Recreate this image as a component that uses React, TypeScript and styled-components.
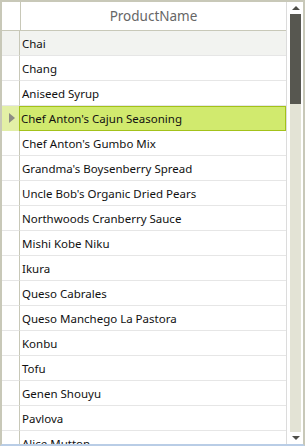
import React from "react";
import styled, { createGlobalStyle } from "styled-components";

const Global = createGlobalStyle`
  html, body { margin: 0; padding: 0; background: #ffffff; }
  body { font-family: "Noto Sans", "Open Sans", sans-serif; }
`;

const products = [
  "Chai",
  "Chang",
  "Aniseed Syrup",
  "Chef Anton's Cajun Seasoning",
  "Chef Anton's Gumbo Mix",
  "Grandma's Boysenberry Spread",
  "Uncle Bob's Organic Dried Pears",
  "Northwoods Cranberry Sauce",
  "Mishi Kobe Niku",
  "Ikura",
  "Queso Cabrales",
  "Queso Manchego La Pastora",
  "Konbu",
  "Tofu",
  "Genen Shouyu",
  "Pavlova",
  "Alice Mutton",
];

const Frame = styled.div`
  box-sizing: border-box;
  width: 305px;
  height: 446px;
  display: flex;
  border-left: 2px solid #c8c8b8;
  border-top: 2px solid #c8c8b8;
  border-right: 2px solid #c8c8b8;
  border-bottom: 2px solid #b9cde6;
  overflow: hidden;
  background: #fff;
`;

const GridArea = styled.div`
  flex: 1;
  display: flex;
  flex-direction: column;
  overflow: hidden;
  border-right: 1px solid #dcdcdc;
`;

const HeaderRow = styled.div`
  display: flex;
  height: 28px;
  flex-shrink: 0;
  border-bottom: 1px solid #c8c8b8;
`;

const Corner = styled.div`
  width: 18px;
  border-right: 1px solid #c8c8b8;
`;

const HeaderCell = styled.div`
  flex: 1;
  display: flex;
  align-items: center;
  justify-content: center;
  font-size: 13.5px;
  color: #666666;
`;

const Row = styled.div<{ $alt?: boolean }>`
  display: flex;
  height: 25px;
  flex-shrink: 0;
  box-sizing: border-box;
  background: ${(p) => (p.$alt ? "#f2f3f0" : "#ffffff")};
`;

const RowHeader = styled.div<{ $selected?: boolean }>`
  width: 18px;
  box-sizing: border-box;
  border-right: 1px solid #c8c8b8;
  border-bottom: 1px solid ${(p) => (p.$selected ? "#e2eea8" : "#e6e6e6")};
  background: ${(p) => (p.$selected ? "#e3f0a6" : "transparent")};
  display: flex;
  align-items: center;
  justify-content: center;
`;

const Cell = styled.div<{ $selected?: boolean }>`
  flex: 1;
  box-sizing: border-box;
  display: flex;
  align-items: center;
  padding-left: 2px;
  font-size: 11.5px;
  color: #111;
  white-space: nowrap;
  border-bottom: 1px solid #e6e6e6;
  ${(p) =>
    p.$selected
      ? `background: #d1ea6e; border: 1px solid #a3c21a; padding-left: 1px; margin-left: -1px;`
      : ""}
`;

const Triangle = styled.div`
  width: 0;
  height: 0;
  border-top: 5px solid transparent;
  border-bottom: 5px solid transparent;
  border-left: 6px solid #8d8d84;
  margin-left: 2px;
`;

const ScrollBar = styled.div`
  width: 16px;
  flex-shrink: 0;
  display: flex;
  flex-direction: column;
  align-items: stretch;
  padding: 0 2px 0 3px;
  box-sizing: border-box;
`;

const Arrow = styled.div<{ $down?: boolean }>`
  height: 12px;
  flex-shrink: 0;
  display: flex;
  align-items: center;
  justify-content: center;
  &::after {
    content: "";
    width: 0;
    height: 0;
    border-left: 4px solid transparent;
    border-right: 4px solid transparent;
    ${(p) =>
      p.$down
        ? "border-top: 4px solid #4e4e48;"
        : "border-bottom: 4px solid #4e4e48;"}
  }
`;

const Track = styled.div`
  flex: 1;
  background: #e3e3d5;
  display: flex;
  flex-direction: column;
`;

const Thumb = styled.div`
  height: 90px;
  background: #575750;
`;

export default function App() {
  return (
    <>
      <Global />
      <Frame>
        <GridArea>
          <HeaderRow>
            <Corner />
            <HeaderCell>ProductName</HeaderCell>
          </HeaderRow>
          {products.map((name, i) => {
            const selected = i === 3;
            return (
              <Row key={name} $alt={i === 0}>
                <RowHeader $selected={selected}>{selected && <Triangle />}</RowHeader>
                <Cell $selected={selected}>{name}</Cell>
              </Row>
            );
          })}
        </GridArea>
        <ScrollBar>
          <Arrow />
          <Track>
            <Thumb />
          </Track>
          <Arrow $down />
        </ScrollBar>
      </Frame>
    </>
  );
}
